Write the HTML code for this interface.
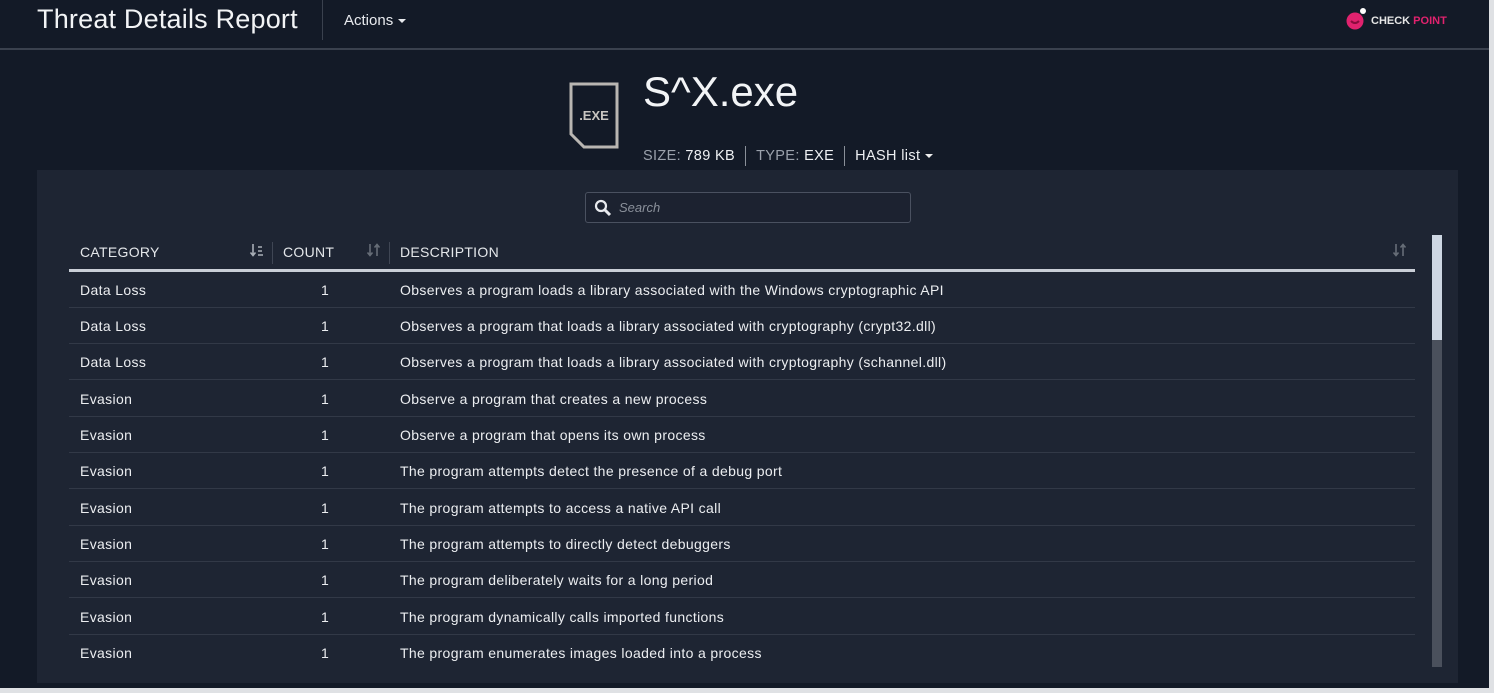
<!DOCTYPE html>
<html><head><meta charset="utf-8"><style>
*{margin:0;padding:0;box-sizing:border-box}
body{width:1494px;height:693px;background:#dfe1e4;font-family:"Liberation Sans",sans-serif;position:relative;overflow:hidden}
.page{position:absolute;left:0;top:0;width:1489px;height:688px;background:#131a27}
.top{position:absolute;left:0;top:0;width:1489px;height:50px;border-bottom:2px solid #3a414e}
.title{position:absolute;left:37px;top:4px;font-size:27px;color:#f2f4f6;letter-spacing:0.2px}
.vsep{position:absolute;left:322px;top:0;width:1px;height:40px;background:#3a414e}
.actions{position:absolute;left:344px;top:12px;font-size:15px;color:#e8eaee}
.caret{display:inline-block;width:0;height:0;border-left:4px solid transparent;border-right:4px solid transparent;border-top:4px solid #e8eaee;vertical-align:middle;margin-left:5px}
.panel{position:absolute;left:37px;top:170px;width:1421px;height:513px;background:#1e2533}
.fname{position:absolute;left:643px;top:68px;font-size:42px;color:#f2f4f6}
.meta{position:absolute;left:643px;top:146px;font-size:14.5px;color:#9aa1ab;letter-spacing:0.35px}
.meta b{font-weight:normal;color:#eef0f3}
.meta i{display:inline-block;width:1px;height:20px;background:#8a9099;vertical-align:middle;margin:0 10px}
.search{position:absolute;left:585px;top:192px;width:326px;height:31px;border:1px solid #4a5160;border-radius:3px;background:#1c2230}
.search span{position:absolute;left:33px;top:7px;font-size:13px;font-style:italic;color:#8a909a}
.th{position:absolute;top:244px;font-size:14px;color:#e4e7ea;letter-spacing:0.3px}
.hline{position:absolute;left:69px;top:269px;width:1346px;height:3px;background:#c9ced6}
.row{position:absolute;left:69px;width:1346px;height:36px;border-bottom:1.5px solid #323947;font-size:14px;color:#eceef1;letter-spacing:0.35px}
.row span{position:absolute;top:10px}
.sb{position:absolute;left:1432px;top:235px;width:10px;height:432px;background:#4a505c}
.sb div{width:10px;height:105px;background:#cdd6e2}
.cd{position:absolute;top:242px;width:1px;height:22px;background:#3f4654}
.si{position:absolute;top:242px}
</style></head><body><div class="page">
<div class="top">
<div class="title">Threat Details Report</div>
<div class="vsep"></div>
<div class="actions">Actions<span class="caret"></span></div>
<svg style="position:absolute;left:1345px;top:7px" width="26" height="26" viewBox="0 0 26 26"><circle cx="10" cy="14" r="8.5" fill="#e0226e"/><circle cx="18" cy="4" r="3" fill="#fff"/><path d="M6 14 q4 4 8 0" stroke="#8a0c3e" stroke-width="2" fill="none"/></svg>
<div style="position:absolute;left:1371px;top:15px;font-size:11px;font-weight:bold;color:#e6e6e6">CHECK <span style="color:#e0226e">POINT</span></div>
</div>
<div class="panel"></div>
<svg style="position:absolute;left:568px;top:82px" width="52" height="68" viewBox="0 0 52 68"><path d="M3 2 H49 V65 H16 L3 52 Z" fill="none" stroke="#b9b6b2" stroke-width="3"/><text x="26" y="38" text-anchor="middle" font-family="Liberation Sans" font-weight="bold" font-size="13" fill="#c9c6c2">.EXE</text></svg>
<div class="fname">S^X.exe</div>
<div class="meta">SIZE: <b>789 KB</b><i></i>TYPE: <b>EXE</b><i></i><b>HASH list</b><span class="caret" style="border-top-color:#eee"></span></div>
<div class="search"><svg style="position:absolute;left:8px;top:6px" width="18" height="18" viewBox="0 0 18 18"><circle cx="7" cy="7" r="5" stroke="#e8eaee" stroke-width="2.2" fill="none"/><path d="M10.5 10.5 L16 16" stroke="#e8eaee" stroke-width="3"/></svg><span>Search</span></div>
<div class="th" style="left:80px">CATEGORY</div>
<svg class="si" style="left:249px" width="16" height="16" viewBox="0 0 16 16"><path d="M4 2V13M1.5 10.5L4 13.5L6.5 10.5" stroke="#a8aeb6" stroke-width="1.6" fill="none"/><path d="M9 5h4M9 9h4M9 13h5" stroke="#a8aeb6" stroke-width="1.6"/></svg>
<div class="cd" style="left:272px"></div>
<div class="th" style="left:283px">COUNT</div>
<svg class="si" style="left:366px" width="16" height="16" viewBox="0 0 16 16"><path d="M4 2V13M1.5 10.5L4 13.5L6.5 10.5M11 14V3M8.5 5.5L11 2.5L13.5 5.5" stroke="#666d77" stroke-width="1.6" fill="none"/></svg>
<div class="cd" style="left:389px"></div>
<div class="th" style="left:400px">DESCRIPTION</div>
<svg class="si" style="left:1392px" width="16" height="16" viewBox="0 0 16 16"><path d="M4 2V13M1.5 10.5L4 13.5L6.5 10.5M11 14V3M8.5 5.5L11 2.5L13.5 5.5" stroke="#666d77" stroke-width="1.6" fill="none"/></svg>
<div class="hline"></div>
<div class="row" style="top:272px"><span style="left:11px">Data Loss</span><span style="left:252px">1</span><span style="left:331px">Observes a program loads a library associated with the Windows cryptographic API</span></div>
<div class="row" style="top:308px"><span style="left:11px">Data Loss</span><span style="left:252px">1</span><span style="left:331px">Observes a program that loads a library associated with cryptography (crypt32.dll)</span></div>
<div class="row" style="top:344px"><span style="left:11px">Data Loss</span><span style="left:252px">1</span><span style="left:331px">Observes a program that loads a library associated with cryptography (schannel.dll)</span></div>
<div class="row" style="top:381px"><span style="left:11px">Evasion</span><span style="left:252px">1</span><span style="left:331px">Observe a program that creates a new process</span></div>
<div class="row" style="top:417px"><span style="left:11px">Evasion</span><span style="left:252px">1</span><span style="left:331px">Observe a program that opens its own process</span></div>
<div class="row" style="top:453px"><span style="left:11px">Evasion</span><span style="left:252px">1</span><span style="left:331px">The program attempts detect the presence of a debug port</span></div>
<div class="row" style="top:490px"><span style="left:11px">Evasion</span><span style="left:252px">1</span><span style="left:331px">The program attempts to access a native API call</span></div>
<div class="row" style="top:526px"><span style="left:11px">Evasion</span><span style="left:252px">1</span><span style="left:331px">The program attempts to directly detect debuggers</span></div>
<div class="row" style="top:562px"><span style="left:11px">Evasion</span><span style="left:252px">1</span><span style="left:331px">The program deliberately waits for a long period</span></div>
<div class="row" style="top:599px"><span style="left:11px">Evasion</span><span style="left:252px">1</span><span style="left:331px">The program dynamically calls imported functions</span></div>
<div class="row" style="top:635px;border-bottom:none"><span style="left:11px">Evasion</span><span style="left:252px">1</span><span style="left:331px">The program enumerates images loaded into a process</span></div>
<div class="sb"><div></div></div>
</div></body></html>
